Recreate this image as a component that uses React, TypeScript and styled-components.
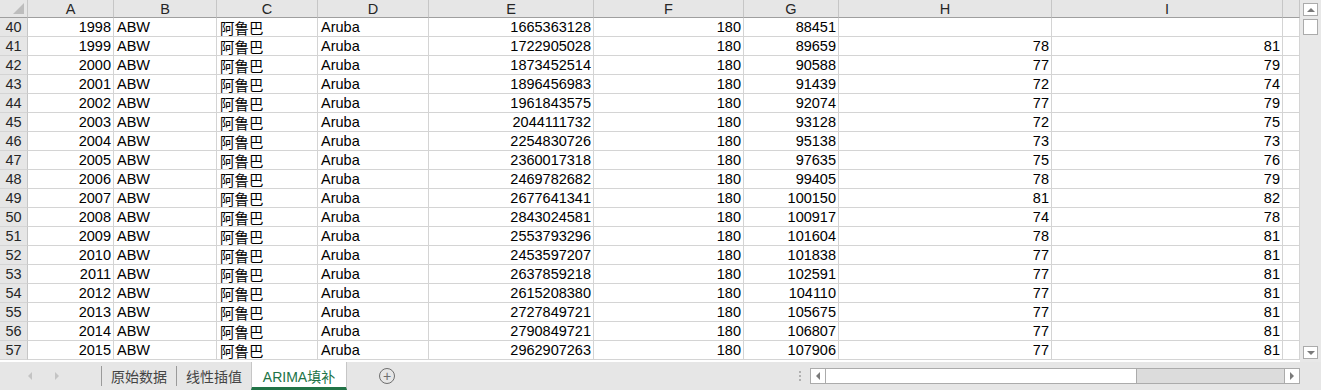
import { Fragment } from "react";
import styled, { createGlobalStyle, css } from "styled-components";

const GlobalStyle = createGlobalStyle`
  html, body {
    margin: 0;
    padding: 0;
    background: #ffffff;
  }
  body {
    font-family: "Liberation Sans", "Noto Sans CJK SC", sans-serif;
  }
`;

const COLS = [
  { name: "A", width: 86 },
  { name: "B", width: 103 },
  { name: "C", width: 101 },
  { name: "D", width: 111 },
  { name: "E", width: 165 },
  { name: "F", width: 150 },
  { name: "G", width: 95 },
  { name: "H", width: 213 },
  { name: "I", width: 231 },
  { name: "", width: 17 },
];

const ROWS: (string | number)[][] = [
  [40, 1998, 1665363128, 88451, "", ""],
  [41, 1999, 1722905028, 89659, 78, 81],
  [42, 2000, 1873452514, 90588, 77, 79],
  [43, 2001, 1896456983, 91439, 72, 74],
  [44, 2002, 1961843575, 92074, 77, 79],
  [45, 2003, 2044111732, 93128, 72, 75],
  [46, 2004, 2254830726, 95138, 73, 73],
  [47, 2005, 2360017318, 97635, 75, 76],
  [48, 2006, 2469782682, 99405, 78, 79],
  [49, 2007, 2677641341, 100150, 81, 82],
  [50, 2008, 2843024581, 100917, 74, 78],
  [51, 2009, 2553793296, 101604, 78, 81],
  [52, 2010, 2453597207, 101838, 77, 81],
  [53, 2011, 2637859218, 102591, 77, 81],
  [54, 2012, 2615208380, 104110, 77, 81],
  [55, 2013, 2727849721, 105675, 77, 81],
  [56, 2014, 2790849721, 106807, 77, 81],
  [57, 2015, 2962907263, 107906, 77, 81],
];

const Window = styled.div`
  width: 1321px;
  height: 390px;
  display: flex;
  flex-direction: column;
  overflow: hidden;
  background: #e6e6e6;
`;

const SheetArea = styled.div`
  height: 362px;
  display: flex;
  background: #ffffff;
`;

const Grid = styled.div`
  width: 1300px;
  height: 362px;
  overflow: hidden;
  display: grid;
  grid-template-columns: 28px ${COLS.map((c) => `${c.width}px`).join(" ")};
  grid-auto-rows: 19px;
  grid-template-rows: 18px;
  align-content: start;
`;

const Corner = styled.div`
  position: relative;
  background: #e6e6e6;
  border-right: 1px solid #c6c6c6;
  border-bottom: 1px solid #9f9f9f;
  box-sizing: border-box;
  &::after {
    content: "";
    position: absolute;
    right: 3px;
    bottom: 3px;
    width: 0;
    height: 0;
    border-left: 11px solid transparent;
    border-bottom: 11px solid #bdbdbd;
  }
`;

const ColHeader = styled.div`
  background: #e6e6e6;
  border-right: 1px solid #c6c6c6;
  border-bottom: 1px solid #9f9f9f;
  box-sizing: border-box;
  display: flex;
  align-items: center;
  justify-content: center;
  font-size: 14.5px;
  color: #262626;
  line-height: 1;
  padding-top: 1px;
`;

const RowHeader = styled.div`
  background: #e6e6e6;
  border-right: 1px solid #c6c6c6;
  border-bottom: 1px solid #d4d4d4;
  box-sizing: border-box;
  display: flex;
  align-items: center;
  justify-content: center;
  font-size: 14.5px;
  color: #262626;
`;

const Cell = styled.div<{ $align?: "left" | "right" }>`
  border-right: 1px solid #d4d4d4;
  border-bottom: 1px solid #d4d4d4;
  box-sizing: border-box;
  display: flex;
  align-items: center;
  padding: 0 2px 0 3px;
  font-size: 14.5px;
  color: #000000;
  white-space: nowrap;
  overflow: hidden;
  ${(p) =>
    p.$align === "right"
      ? css`
          justify-content: flex-end;
        `
      : css`
          justify-content: flex-start;
        `}
`;

const VScroll = styled.div`
  width: 21px;
  height: 362px;
  background: #e8e8e8;
  display: flex;
  flex-direction: column;
  align-items: center;
  padding: 3px 0 3px;
  box-sizing: border-box;
  gap: 3px;
`;

const ScrollBtn = styled.div`
  width: 15px;
  height: 13px;
  background: #ffffff;
  border: 1px solid #ababab;
  box-sizing: border-box;
  display: flex;
  align-items: center;
  justify-content: center;
`;

const VThumb = styled.div`
  width: 15px;
  height: 16px;
  background: #ffffff;
  border: 1px solid #ababab;
  box-sizing: border-box;
`;

const VSpacer = styled.div`
  flex: 1;
`;

const Arrow = styled.span<{ $dir: "up" | "down" | "left" | "right"; $color?: string }>`
  width: 0;
  height: 0;
  ${(p) => {
    const c = p.$color ?? "#7a7a7a";
    switch (p.$dir) {
      case "up":
        return css`
          border-left: 4px solid transparent;
          border-right: 4px solid transparent;
          border-bottom: 4px solid ${c};
        `;
      case "down":
        return css`
          border-left: 4px solid transparent;
          border-right: 4px solid transparent;
          border-top: 4px solid ${c};
        `;
      case "left":
        return css`
          border-top: 4px solid transparent;
          border-bottom: 4px solid transparent;
          border-right: 4px solid ${c};
        `;
      default:
        return css`
          border-top: 4px solid transparent;
          border-bottom: 4px solid transparent;
          border-left: 4px solid ${c};
        `;
    }
  }}
`;

const TabBar = styled.div`
  height: 28px;
  display: flex;
  align-items: stretch;
  background: #e6e6e6;
  font-size: 14px;
  color: #444444;
`;

const NavArea = styled.div`
  width: 101px;
  display: flex;
  align-items: center;
  padding-left: 28px;
  gap: 23px;
  box-sizing: border-box;
`;

const Separator = styled.div`
  width: 1px;
  align-self: center;
  height: 20px;
  background: #9a9a9a;
`;

const Tab = styled.div<{ $active?: boolean }>`
  width: ${(p) => (p.$active ? "96px" : "74px")};
  display: flex;
  align-items: center;
  justify-content: center;
  box-sizing: border-box;
  ${(p) =>
    p.$active &&
    css`
      background: #ffffff;
      color: #217346;
      border-bottom: 3px solid #217346;
      border-left: 1px solid #c6c6c6;
      border-right: 1px solid #c6c6c6;
      padding-top: 2px;
    `}
`;

const AddButton = styled.div`
  margin-left: 32px;
  align-self: center;
  width: 16px;
  height: 16px;
  border: 1px solid #6e6e6e;
  border-radius: 50%;
  box-sizing: border-box;
  display: flex;
  align-items: center;
  justify-content: center;
  color: #6e6e6e;
  font-size: 14px;
  line-height: 1;
`;

const Grow = styled.div`
  flex: 1;
`;

const Splitter = styled.div`
  width: 17px;
  display: flex;
  flex-direction: column;
  align-items: center;
  justify-content: center;
  gap: 2px;
  margin-right: 2px;
  span {
    width: 2px;
    height: 2px;
    background: #b0b0b0;
  }
`;

const HScroll = styled.div`
  width: 490px;
  height: 16px;
  align-self: center;
  margin-right: 21px;
  display: flex;
  background: #dcdcdc;
  border: 1px solid #ababab;
  box-sizing: border-box;
`;

const HBtn = styled.div`
  width: 14px;
  background: #ffffff;
  display: flex;
  align-items: center;
  justify-content: center;
  border-right: 1px solid #ababab;
  &:last-child {
    border-right: none;
    border-left: 1px solid #ababab;
  }
`;

const HThumb = styled.div`
  width: 310px;
  background: #ffffff;
  border-right: 1px solid #ababab;
`;

export default function App() {
  return (
    <>
      <GlobalStyle />
      <Window>
        <SheetArea>
          <Grid>
            <Corner />
            {COLS.map((c, i) => (
              <ColHeader key={i}>{c.name}</ColHeader>
            ))}
            {ROWS.map(([row, year, gdp, pop, h, i]) => (
              <Fragment key={row}>
                <RowHeader>{row}</RowHeader>
                <Cell $align="right">{year}</Cell>
                <Cell>ABW</Cell>
                <Cell>阿鲁巴</Cell>
                <Cell>Aruba</Cell>
                <Cell $align="right">{gdp}</Cell>
                <Cell $align="right">180</Cell>
                <Cell $align="right">{pop}</Cell>
                <Cell $align="right">{h}</Cell>
                <Cell $align="right">{i}</Cell>
                <Cell />
              </Fragment>
            ))}
          </Grid>
          <VScroll>
            <ScrollBtn>
              <Arrow $dir="up" />
            </ScrollBtn>
            <VThumb />
            <VSpacer />
            <ScrollBtn>
              <Arrow $dir="down" />
            </ScrollBtn>
          </VScroll>
        </SheetArea>
        <TabBar>
          <NavArea>
            <Arrow $dir="left" $color="#c4c4c4" />
            <Arrow $dir="right" $color="#c4c4c4" />
          </NavArea>
          <Separator />
          <Tab>原始数据</Tab>
          <Separator />
          <Tab>线性插值</Tab>
          <Tab $active>ARIMA填补</Tab>
          <AddButton>+</AddButton>
          <Grow />
          <Splitter>
            <span />
            <span />
            <span />
          </Splitter>
          <HScroll>
            <HBtn>
              <Arrow $dir="left" />
            </HBtn>
            <HThumb />
            <Grow />
            <HBtn>
              <Arrow $dir="right" />
            </HBtn>
          </HScroll>
        </TabBar>
      </Window>
    </>
  );
}
